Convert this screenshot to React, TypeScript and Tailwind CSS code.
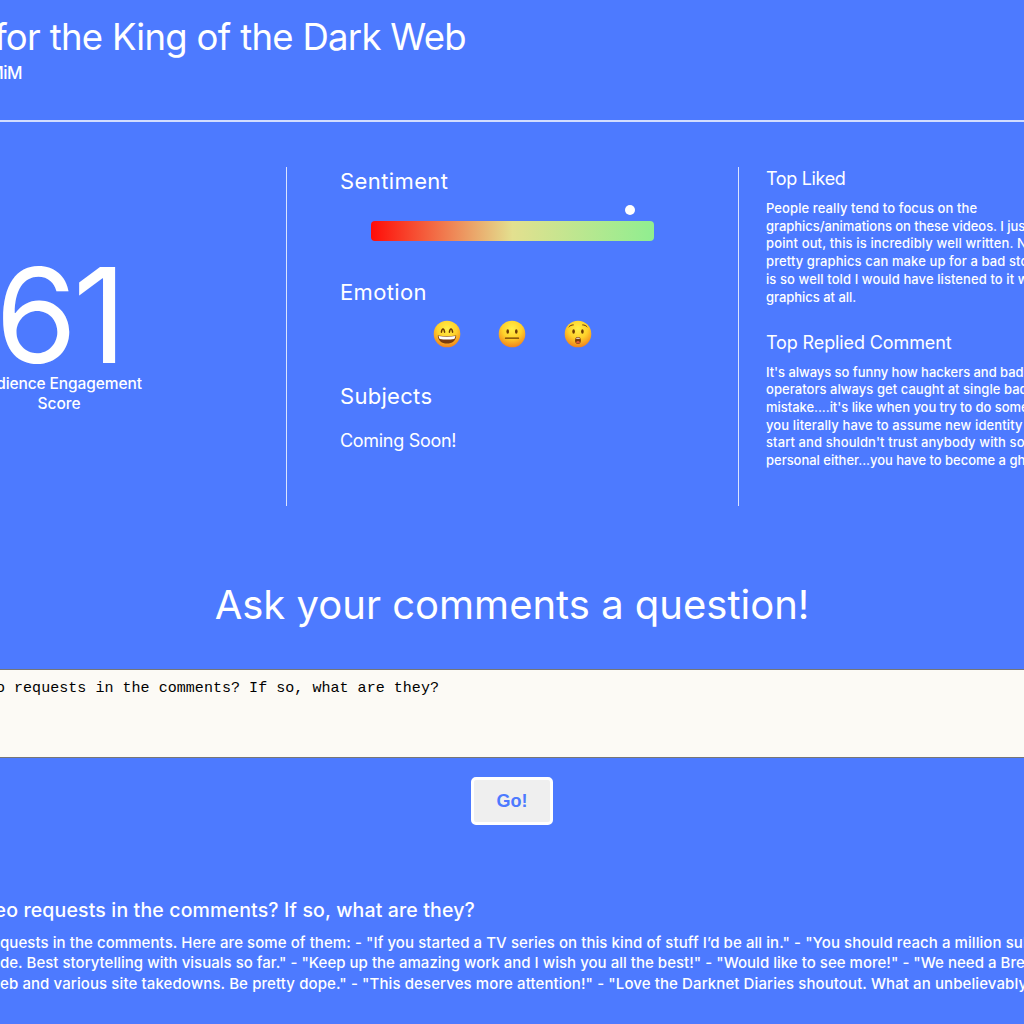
import React from 'react';

interface Line {
  text: string;
  spacing: string;
}

const TOP_LIKED: Line[] = [
  { text: 'People really tend to focus on the', spacing: 'tracking-[0.1px]' },
  { text: 'graphics/animations on these videos. I just want to', spacing: 'tracking-[-0.04px]' },
  { text: 'point out, this is incredibly well written. No amount of', spacing: 'tracking-[0.13px]' },
  { text: 'pretty graphics can make up for a bad story. This', spacing: 'tracking-[0.1px]' },
  { text: 'is so well told I would have listened to it with no', spacing: 'tracking-[0.09px]' },
  { text: 'graphics at all.', spacing: 'tracking-[-0.03px]' },
];

const TOP_REPLIED: Line[] = [
  { text: "It's always so funny how hackers and bad", spacing: 'tracking-[-0.05px]' },
  { text: 'operators always get caught at single bad', spacing: 'tracking-[0.05px]' },
  { text: "mistake....it's like when you try to do something", spacing: 'tracking-[-0.04px]' },
  { text: 'you literally have to assume new identity from', spacing: 'tracking-[0.12px]' },
  { text: "start and shouldn't trust anybody with something", spacing: 'tracking-[0.1px]' },
  { text: 'personal either...you have to become a ghost', spacing: 'tracking-[-0.02px]' },
];

const ANSWER: Line[] = [
  {
    text: 'quests in the comments. Here are some of them: - "If you started a TV series on this kind of stuff I’d be all in." - "You should reach a million subs',
    spacing: 'tracking-[0.07px]',
  },
  {
    text: 'de. Best storytelling with visuals so far." - "Keep up the amazing work and I wish you all the best!" - "Would like to see more!" - "We need a Breach',
    spacing: 'tracking-[0.02px]',
  },
  {
    text: 'eb and various site takedowns. Be pretty dope." - "This deserves more attention!" - "Love the Darknet Diaries shoutout. What an unbelievably',
    spacing: 'tracking-[0.1px]',
  },
];

const SENTIMENT = 91.5;

const Lines: React.FC<{ lines: Line[] }> = ({ lines }) => (
  <>
    {lines.map((line) => (
      <p key={line.text} className={line.spacing}>
        {line.text}
      </p>
    ))}
  </>
);

const Emoji: React.FC<{ mood: 'happy' | 'neutral' | 'surprised' }> = ({ mood }) => (
  <svg className="h-7 w-7" viewBox="0 0 28 28" fill="none">
    <defs>
      <radialGradient id={`face-${mood}`} cx="0.5" cy="0.3" r="0.72">
        <stop offset="0" stopColor="#fff04a" />
        <stop offset="0.5" stopColor="#ffd22b" />
        <stop offset="1" stopColor="#f07f1c" />
      </radialGradient>
    </defs>
    <circle cx="14" cy="14" r="13.3" fill={`url(#face-${mood})`} />
    {mood === 'happy' && (
      <>
        <path d="M8.4 12.2C8.7 9.8 9.3 8.9 10 8.9s1.3.9 1.6 3.3" stroke="#6b3a05" strokeWidth="1.5" strokeLinecap="round" />
        <path d="M16.4 12.2c.3-2.4.9-3.3 1.6-3.3s1.3.9 1.6 3.3" stroke="#6b3a05" strokeWidth="1.5" strokeLinecap="round" />
        <path d="M4.8 15.4c6 1 12.4 1 18.4 0 0 4.9-4.1 8.2-9.2 8.2s-9.2-3.3-9.2-8.2z" fill="#7a3b0c" />
        <path d="M5.6 16c5.6.9 11.2.9 16.8 0-.2 1.5-.6 2.3-1.2 3-4.8.8-9.6.8-14.4 0-.6-.7-1-1.5-1.2-3z" fill="#fff" />
      </>
    )}
    {mood === 'neutral' && (
      <>
        <ellipse cx="9.7" cy="11.5" rx="1.3" ry="2.2" fill="#6b3a05" />
        <ellipse cx="18.3" cy="11.5" rx="1.3" ry="2.2" fill="#6b3a05" />
        <path d="M7.5 18.2h13" stroke="#6b3a05" strokeWidth="1.3" strokeLinecap="round" />
      </>
    )}
    {mood === 'surprised' && (
      <>
        <path d="M5 6.8c1-1.2 2.500-1.900 4.300-1.900M23 6.800c-1-1.200-2.500-1.900-4.300-1.900" stroke="#6b3a05" strokeWidth="1" strokeLinecap="round" />
        <ellipse cx="9.6" cy="11.5" rx="1.3" ry="2.2" fill="#6b3a05" />
        <ellipse cx="18.4" cy="11.5" rx="1.3" ry="2.2" fill="#6b3a05" />
        <ellipse cx="14" cy="20.5" rx="2.9" ry="3.4" fill="#7a3b0c" />
        <path d="M12 18.8c.3-1.4 3.7-1.4 4 0z" fill="#fff" />
        <ellipse cx="14" cy="22.2" rx="1.7" ry="1.2" fill="#e0603a" />
      </>
    )}
  </svg>
);

const App: React.FC = () => {
  return (
    <div className="h-[1024px] w-[1024px] overflow-hidden whitespace-nowrap bg-[#4d7aff] font-['Inter',sans-serif] font-[450] text-white">
      {/* Header */}
      <header className="h-[122px] border-b-2 border-white/75 pt-[13px]">
        <div className="flex w-[466px] justify-end">
          <h1 className="text-[36.5px] font-normal leading-[48px] tracking-[-0.7px]">for the King of the Dark Web</h1>
        </div>
        <div className="flex w-[22px] justify-end">
          <p className="text-[17px] leading-6 tracking-[-0.5px]">MiM</p>
        </div>
      </header>

      {/* Stats */}
      <main className="grid h-[384px] grid-cols-[287px_452px_1fr] pt-[45px]">
        <section className="border-r border-white/80 pt-[90px]">
          <div className="flex w-[118px] flex-col items-center">
            <span className="text-[132px] font-normal leading-[116px] tracking-[-4px]">61</span>
            <span className="mt-px text-[15.5px] leading-[20px] tracking-[-0.1px]">Audience Engagement</span>
            <span className="text-[15.5px] leading-[20px]">Score</span>
          </div>
        </section>

        <section className="border-r border-white/80 pl-[53px]">
          <h2 className="-mt-px text-[22px] font-normal leading-[30px] tracking-[0.4px]">Sentiment</h2>
          <div className="ml-[31px] mt-[9px] w-[283px]">
            <div className="flex h-2.5" style={{ paddingLeft: `calc(${SENTIMENT}% - 5px)` }}>
              <span className="h-2.5 w-2.5 rounded-full bg-white" />
            </div>
            <div className="mt-1.5 h-5 rounded bg-linear-to-r/srgb from-[#ff0c08] via-[#e3e08f] to-[#90ee90]" />
          </div>
          <h2 className="mt-9 text-[22px] font-normal leading-[30px] tracking-[0.35px]">Emotion</h2>
          <div className="ml-[92.7px] mt-[13px] flex gap-[37.7px]">
            <Emoji mood="happy" />
            <Emoji mood="neutral" />
            <Emoji mood="surprised" />
          </div>
          <h2 className="mt-[33px] text-[22px] font-normal leading-[30px] tracking-[0.3px]">Subjects</h2>
          <p className="mt-[18px] text-[18px] font-normal leading-6 tracking-[-0.3px]">Coming Soon!</p>
        </section>

        <section className="overflow-hidden pl-[27px]">
          <h3 className="text-[18px] font-normal leading-6 tracking-[-0.35px]">Top Liked</h3>
          <div className="mt-[9px] text-[13px] leading-[17.7px]">
            <Lines lines={TOP_LIKED} />
          </div>
          <h3 className="mt-[24.4px] text-[18px] font-normal leading-6 tracking-[-0.12px]">Top Replied Comment</h3>
          <div className="mt-[9px] text-[13px] leading-[17.7px]">
            <Lines lines={TOP_REPLIED} />
          </div>
        </section>
      </main>

      {/* Question */}
      <section className="flex flex-col items-center pt-[73px]">
        <h1 className="text-[40px] font-normal leading-[52px]">Ask your comments a question!</h1>
        <div className="mt-[38px] h-[89px] w-full border-y border-[#767676] bg-[#fcfaf5] pt-[10px] text-black">
          <div className="flex w-[439px] justify-end">
            <p className="font-['Liberation_Mono',monospace] text-[15px] font-normal leading-[18px] tracking-[0.04px]">
              o requests in the comments? If so, what are they?
            </p>
          </div>
        </div>
        <button className="mt-[19px] h-12 w-[82px] rounded-[5px] border-[3px] border-white bg-[#efefef] font-['Liberation_Sans',sans-serif] text-[18px] font-bold text-[#4d7aff]">
          Go!
        </button>
      </section>

      {/* Answer */}
      <section className="pt-[71px]">
        <div className="flex w-[475px] justify-end">
          <h2 className="text-[19.5px] leading-7 tracking-[0.15px]">eo requests in the comments? If so, what are they?</h2>
        </div>
        <div className="mt-[9px] text-[15px] leading-[20.4px]">
          <Lines lines={ANSWER} />
        </div>
      </section>
    </div>
  );
};

export default App;
